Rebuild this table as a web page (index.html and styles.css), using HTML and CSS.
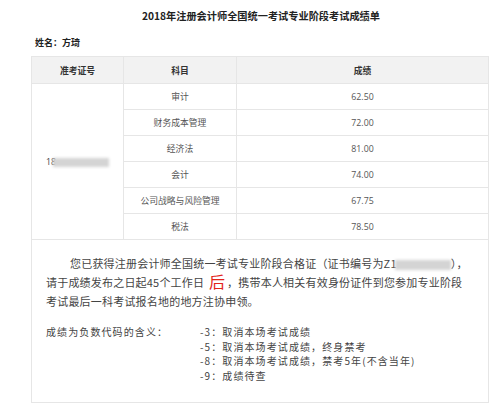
FILE: index.html
```html
<!DOCTYPE html>
<html lang="zh">
<head>
<meta charset="utf-8">
<link rel="stylesheet" href="styles.css">
</head>
<body>
<div class="wrap">
  <h1 class="title">2018年注册会计师全国统一考试专业阶段考试成绩单</h1>
  <div class="name">姓名：方琦</div>
  <table class="grid">
    <colgroup><col class="c1"><col class="c2"><col class="c3"></colgroup>
    <thead>
      <tr><th>准考证号</th><th>科目</th><th>成绩</th></tr>
    </thead>
    <tbody>
      <tr><td rowspan="6" class="idcell">18<span class="blur blur-id"></span></td><td>审计</td><td>62.50</td></tr>
      <tr><td>财务成本管理</td><td>72.00</td></tr>
      <tr><td>经济法</td><td>81.00</td></tr>
      <tr><td>会计</td><td>74.00</td></tr>
      <tr><td>公司战略与风险管理</td><td>67.75</td></tr>
      <tr><td>税法</td><td>78.50</td></tr>
      <tr>
        <td colspan="3" class="notice">
          <div class="l1">您已获得注册会计师全国统一考试专业阶段合格证（证书编号为Z1<span class="blur blur-cert"></span>），</div>
          <div class="l2">请于成绩发布之日起45个工作日 <span class="hou">后</span>，携带本人相关有效身份证件到您参加专业阶段</div>
          <div class="l3">考试最后一科考试报名地的地方注协申领。</div>
          <div class="codes">
            <div class="label">成绩为负数代码的含义：</div>
            <div class="list">
              <div>-3：取消本场考试成绩</div>
              <div>-5：取消本场考试成绩，终身禁考</div>
              <div>-8：取消本场考试成绩，禁考5年(不含当年)</div>
              <div>-9：成绩待查</div>
            </div>
          </div>
        </td>
      </tr>
    </tbody>
  </table>
</div>
</body>
</html>
```
FILE: styles.css
```css
html, body { margin: 0; padding: 0; background: #fff; }
body { font-family: "Noto Sans CJK SC", "Noto Sans", sans-serif; color: #333; }
.wrap { margin-left: 31px; width: 457px; }
.title {
  margin: 6px 0 0 0;
  font-size: 10.2px;
  line-height: 20px;
  font-weight: bold;
  text-align: center;
  color: #222;
  padding-left: 3px;
}
.name {
  margin-top: 10px;
  padding-left: 4px;
  font-size: 9px;
  line-height: 14px;
  font-weight: bold;
  color: #222;
}
.grid {
  margin-top: 6px;
  width: 457px;
  border-collapse: collapse;
  table-layout: fixed;
  font-family: "Open Sans", "Noto Sans CJK SC", sans-serif;
  font-size: 8.8px;
}
.c1 { width: 92px; }
.c2 { width: 113px; }
.c3 { width: 252px; }
.grid th, .grid td {
  border: 1px solid #e6e6e6;
  text-align: center;
  padding: 0;
}
.grid th {
  background: #f2f2f2;
  height: 26px;
  font-weight: bold;
  color: #333;
  font-family: "Noto Sans CJK SC", sans-serif;
}
.grid td { height: 25px; color: #555; }
.grid td.idcell { color: #444; }
.blur {
  display: inline-block;
  background: #d4d4d4;
  filter: blur(1.6px);
  vertical-align: middle;
}
.blur-id { width: 56px; height: 9px; margin-left: -3px; }
.blur-cert { width: 56px; height: 10px; margin-left: -2px; }
.grid td.notice {
  text-align: left;
  height: auto;
  padding: 15px 0 19px 14px;
  font-family: "Noto Sans CJK SC", sans-serif;
  font-size: 11px;
  letter-spacing: 0.2px;
  color: #444;
  white-space: nowrap;
}
.l1 { line-height: 16px; text-indent: 24px; }
.l2 { line-height: 22px; height: 23px; }
.l3 { line-height: 14px; }
.hou { color: #e2231a; font-size: 16px; line-height: 10px; vertical-align: -1px; margin: 0 2px 0 2px; }
.codes {
  margin-top: 17px;
  display: grid;
  grid-template-columns: 154px auto;
  font-size: 10px;
  letter-spacing: 1.1px;
  line-height: 14.5px;
}
.codes .label { line-height: 14.5px; }
.list div { line-height: 14.5px; }
```
